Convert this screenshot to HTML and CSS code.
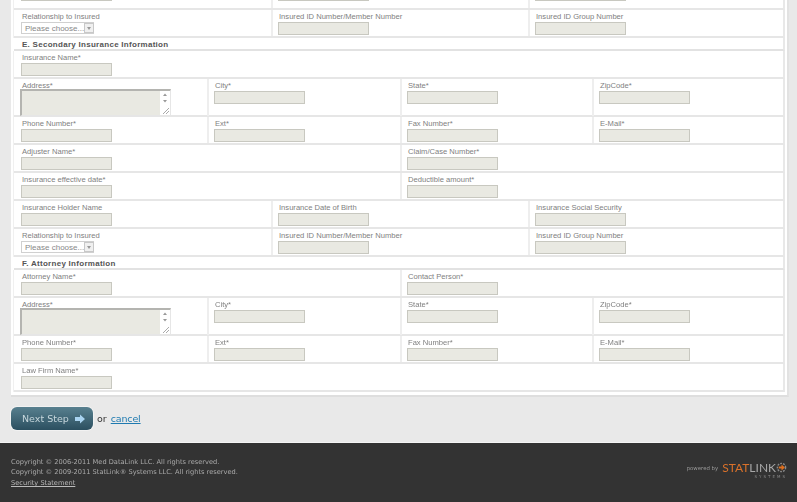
FILE: index.html
```html
<!DOCTYPE html>
<html lang="en">
<head>
<meta charset="utf-8">
<title>Insurance Information</title>
<link rel="stylesheet" href="styles.css">
</head>
<body>
<main class="page">
  <form class="card">
    <div class="row row-stub cols-3">
      <div class="cell"><span class="field"></span></div>
      <div class="cell"><span class="field"></span></div>
      <div class="cell"><span class="field"></span></div>
    </div>
    <div class="row cols-3">
      <div class="cell"><label>Relationship to Insured</label><span class="select"><span>Please choose...</span><i></i></span></div>
      <div class="cell"><label>Insured ID Number/Member Number</label><span class="field"></span></div>
      <div class="cell"><label>Insured ID Group Number</label><span class="field"></span></div>
    </div>
    <h2 class="section">E. Secondary Insurance Information</h2>
    <div class="row"><div class="cell"><label>Insurance Name*</label><span class="field"></span></div></div>
    <div class="row row-tall cols-4">
      <div class="cell"><label>Address*</label><span class="area"><svg viewBox="0 0 10 24" width="10" height="24"><path d="M3 5 5 2.500 7 5ZM3 9 5 11.500 7 9Z" fill="#999"/><path d="M3 23 9 17M6 23 9 20" stroke="#aaa" fill="none"/></svg></span></div>
      <div class="cell"><label>City*</label><span class="field"></span></div>
      <div class="cell"><label>State*</label><span class="field"></span></div>
      <div class="cell"><label>ZipCode*</label><span class="field"></span></div>
    </div>
    <div class="row cols-4">
      <div class="cell"><label>Phone Number*</label><span class="field"></span></div>
      <div class="cell"><label>Ext*</label><span class="field"></span></div>
      <div class="cell"><label>Fax Number*</label><span class="field"></span></div>
      <div class="cell"><label>E-Mail*</label><span class="field"></span></div>
    </div>
    <div class="row cols-2">
      <div class="cell"><label>Adjuster Name*</label><span class="field"></span></div>
      <div class="cell"><label>Claim/Case Number*</label><span class="field"></span></div>
    </div>
    <div class="row cols-2">
      <div class="cell"><label>Insurance effective date*</label><span class="field"></span></div>
      <div class="cell"><label>Deductible amount*</label><span class="field"></span></div>
    </div>
    <div class="row cols-3">
      <div class="cell"><label>Insurance Holder Name</label><span class="field"></span></div>
      <div class="cell"><label>Insurance Date of Birth</label><span class="field"></span></div>
      <div class="cell"><label>Insurance Social Security</label><span class="field"></span></div>
    </div>
    <div class="row cols-3">
      <div class="cell"><label>Relationship to Insured</label><span class="select"><span>Please choose...</span><i></i></span></div>
      <div class="cell"><label>Insured ID Number/Member Number</label><span class="field"></span></div>
      <div class="cell"><label>Insured ID Group Number</label><span class="field"></span></div>
    </div>
    <h2 class="section">F. Attorney Information</h2>
    <div class="row cols-2">
      <div class="cell"><label>Attorney Name*</label><span class="field"></span></div>
      <div class="cell"><label>Contact Person*</label><span class="field"></span></div>
    </div>
    <div class="row row-tall cols-4">
      <div class="cell"><label>Address*</label><span class="area"><svg viewBox="0 0 10 24" width="10" height="24"><path d="M3 5 5 2.500 7 5ZM3 9 5 11.500 7 9Z" fill="#999"/><path d="M3 23 9 17M6 23 9 20" stroke="#aaa" fill="none"/></svg></span></div>
      <div class="cell"><label>City*</label><span class="field"></span></div>
      <div class="cell"><label>State*</label><span class="field"></span></div>
      <div class="cell"><label>ZipCode*</label><span class="field"></span></div>
    </div>
    <div class="row cols-4">
      <div class="cell"><label>Phone Number*</label><span class="field"></span></div>
      <div class="cell"><label>Ext*</label><span class="field"></span></div>
      <div class="cell"><label>Fax Number*</label><span class="field"></span></div>
      <div class="cell"><label>E-Mail*</label><span class="field"></span></div>
    </div>
    <div class="row"><div class="cell"><label>Law Firm Name*</label><span class="field"></span></div></div>
  </form>
  <div class="actions">
    <a class="next" href="#">Next Step <svg viewBox="0 0 10 10" width="10" height="10"><path d="M0 3H5V0.500L10 5 5 9.500V7H0Z" fill="#a9d3f0"/></svg></a>
    <span class="or">or</span>
    <a class="cancel" href="#">cancel</a>
  </div>
</main>
<footer class="footer">
  <div class="legal">
    <p>Copyright © 2006-2011 Med DataLink LLC. All rights reserved.</p>
    <p>Copyright © 2009-2011 StatLink® Systems LLC. All rights reserved.</p>
    <a href="#">Security Statement</a>
  </div>
  <div class="brand">
    <span class="powered">powered by</span>
    <div class="logo">
      <div class="logo-name"><span class="stat">STAT</span><span class="link">LINK</span><svg viewBox="0 0 12 12" width="11" height="11"><circle cx="6" cy="6" r="4.500" fill="none" stroke="#8a8a8a" stroke-width="1.500" stroke-dasharray="2 1.200"/><path d="M3 4.800H6V2.800L9.800 6 6 9.200V7.200H3Z" fill="#e0701f"/></svg></div>
      <div class="logo-sub">SYSTEMS</div>
    </div>
  </div>
</footer>
</body>
</html>
```
FILE: styles.css
```css
* { box-sizing: border-box; }
html, body { margin: 0; padding: 0; }
body { width: 797px; height: 502px; overflow: hidden; background: #e9e9e9; font-family: "Liberation Sans", Arial, sans-serif; }
.page { height: 442px; padding: 0 8px 0 11px; filter: blur(0.35px); }
.card { background: #fff; width: 778px; height: 397px; padding: 0 2px 0 3px; border-bottom: 2px solid #dedede; border-right: 2px solid #e2e2e2; }
.row { display: grid; height: 28px; border-bottom: 2px solid #e6e6e6; border-right: 2px solid #e8e8e8; box-shadow: -1px 0 #f0f0f0; }
.row-stub { height: 10px; overflow: hidden; }
.row-stub .field { margin-top: -13px; }
.row-stub .cell { overflow: hidden; }
.row-tall { height: 38px; }
.cols-2 { grid-template-columns: 386px 1fr; }
.cols-3 { grid-template-columns: 257px 257px 1fr; }
.cols-4 { grid-template-columns: 193px 193px 192px 1fr; }
.cell { padding: 1px 0 0 5px; border-left: 2px solid #eeeeee; min-width: 0; }
.cell:first-child { padding-left: 7px; border-left: 0; }
label { display: block; height: 10px; padding-left: 1px; font-size: 7.600px; line-height: 11px; color: #808080; white-space: nowrap; }
.field { display: block; width: 91px; height: 13px; margin-top: 1px; background: #e9e9e2; border: 1px solid #c8c8c0; }
.select { display: flex; align-items: center; justify-content: space-between; width: 73px; height: 12px; margin-top: 1px; padding: 0 0 0 3px; border: 1px solid #d0d0d0; background: #fff; font-size: 8px; color: #888; white-space: nowrap; }
.select i { position: relative; flex: none; width: 10px; height: 10px; background: #f0f0f0; border: 1px solid #c8c8c8; }
.select i::after { content: ""; position: absolute; left: 2px; top: 3px; border: 2px solid transparent; border-top: 3px solid #999; }
.area { display: flex; justify-content: flex-end; width: 151px; height: 27px; margin: -1px 0 0 -1px; background: linear-gradient(to right, #e9e9e2 138px, #fff 138px); border: 1px solid #e6e6e6; border-top: 2px solid #b4b4b0; border-left: 2px solid #b4b4b0; overflow: hidden; }
.section { height: 13px; margin: 0; padding: 0 0 0 8px; font-size: 8px; line-height: 13px; font-weight: bold; color: #555; letter-spacing: 0.280px; border-bottom: 2px solid #e2e2e2; border-right: 2px solid #e8e8e8; }
.actions { display: flex; align-items: flex-start; height: 45px; padding-top: 10px; font-family: "DejaVu Sans", Verdana, sans-serif; font-size: 9.500px; line-height: 23px; }
.next { display: flex; align-items: center; gap: 6px; width: 82px; height: 23px; padding-left: 11px; border-radius: 6px; background: linear-gradient(#58808f, #2b4f60); color: #c6d6dc; font-size: 9.500px; text-decoration: none; box-shadow: 0 0 0 1px #f2f2f2; }
.or { margin-left: 4px; color: #333; }
.cancel { margin-left: 4px; color: #1f7ab0; font-size: 9.500px; letter-spacing: -0.150px; }
.footer { display: flex; justify-content: space-between; height: 60px; padding: 14px 10px 0 11px; background: #333; border-top: 1px solid #f4f4f4; font-family: "DejaVu Sans", Verdana, sans-serif; color: #aaa; filter: blur(0.35px); }
.legal { font-size: 6.650px; line-height: 10px; }
.legal p { margin: 0; }
.legal a { display: block; margin-top: 1px; color: #bbb; }
.brand { display: flex; align-items: flex-start; gap: 4px; }
.powered { margin-top: 8px; font-size: 5.400px; color: #999; }
.logo { display: flex; flex-direction: column; align-items: flex-end; margin-top: 4px; }
.logo-name { display: flex; align-items: center; font-family: "Lato", sans-serif; font-size: 12px; line-height: 13px; letter-spacing: 0; }
.stat { color: #d9712a; }
.link { color: #a8a8a8; }
.logo-sub { margin-top: 1px; font-size: 4px; line-height: 4px; letter-spacing: 2px; color: #888; }
```
